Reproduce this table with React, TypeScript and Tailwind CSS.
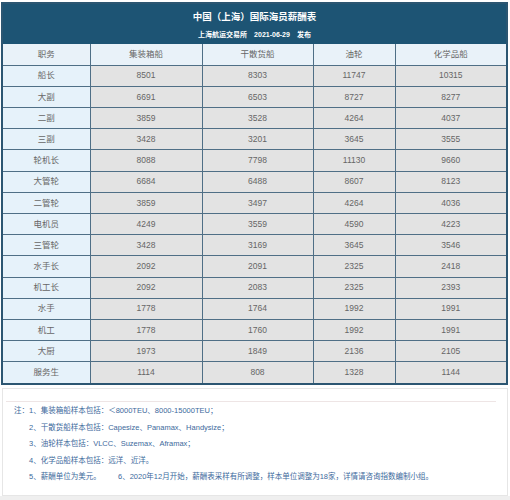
const columns = ['职务', '集装箱船', '干散货船', '油轮', '化学品船'];

const rows: [string, number, number, number, number][] = [
  ['船长', 8501, 8303, 11747, 10315],
  ['大副', 6691, 6503, 8727, 8277],
  ['二副', 3859, 3528, 4264, 4037],
  ['三副', 3428, 3201, 3645, 3555],
  ['轮机长', 8088, 7798, 11130, 9660],
  ['大管轮', 6684, 6488, 8607, 8123],
  ['二管轮', 3859, 3497, 4264, 4036],
  ['电机员', 4249, 3559, 4590, 4223],
  ['三管轮', 3428, 3169, 3645, 3546],
  ['水手长', 2092, 2091, 2325, 2418],
  ['机工长', 2092, 2083, 2325, 2393],
  ['水手', 1778, 1764, 1992, 1991],
  ['机工', 1778, 1760, 1992, 1991],
  ['大厨', 1973, 1849, 2136, 2105],
  ['服务生', 1114, 808, 1328, 1144],
];

const colWidths = ['w-[87px]', 'w-[112px]', 'w-[111px]', 'w-[82px]', 'w-[111px]'];

const notes = [
  '集装箱船样本包括：＜8000TEU、8000-15000TEU；',
  '干散货船样本包括：Capesize、Panamax、Handysize；',
  '油轮样本包括：VLCC、Suzemax、Aframax；',
  '化学品船样本包括：远洋、近洋。',
];

const font = { fontFamily: '"Liberation Sans", "Noto Sans CJK SC", sans-serif' };

export default function App() {
  return (
    <div className="w-[510px] h-[500px] bg-white overflow-hidden pt-[2px]" style={font}>
      {/* salary table */}
      <div className="mx-[1px] w-[507px] border-2 border-[#2c5672]">
        <div className="h-[40px] bg-[#1d5474] text-white flex flex-col items-center font-bold">
          <div className="text-[9.5px] leading-none mt-[8px]">中国（上海）国际海员薪酬表</div>
          <div className="text-[7px] leading-none mt-[9px]">上海航运交易所　2021-06-29　发布</div>
        </div>
        <table className="w-full table-fixed border-collapse text-[8.5px] text-[#666]">
          <thead>
            <tr>
              {columns.map((c, i) => (
                <th
                  key={c}
                  className={`${colWidths[i]} h-[21.2px] p-0 font-normal bg-[#e9f2f9] border border-[#4f6f86] border-t-0 ${i === 0 ? 'border-l-0' : ''} ${i === 4 ? 'border-r-0' : ''}`}
                >
                  {c}
                </th>
              ))}
            </tr>
          </thead>
          <tbody>
            {rows.map((r, ri) => (
              <tr key={r[0]}>
                {r.map((v, i) => (
                  <td
                    key={i}
                    className={`h-[21.2px] p-0 text-center border border-[#4f6f86] ${i === 0 ? 'bg-[#e6f2fa] border-l-0' : 'bg-[#e3e3e3]'} ${i === 4 ? 'border-r-0' : ''} ${ri === rows.length - 1 ? 'border-b-0' : ''}`}
                  >
                    {v}
                  </td>
                ))}
              </tr>
            ))}
          </tbody>
        </table>
      </div>

      {/* notes */}
      <div className="mt-[3px] mx-[2px] h-[108px] border border-[#e6e6e6] bg-white px-[3px] pt-[12px] text-[7.5px] text-[#3d6a9c] leading-none">
        <div className="h-px bg-[#eee5e5] mr-[8px]" />
        <div className="flex flex-col gap-[9px] mt-[5px] pl-[8px]">
          {notes.map((n, i) => (
            <div key={n} className="flex">
              <span className="w-[15px]">{i === 0 ? '注：' : ''}</span>
              <span>{i + 1}、{n}</span>
            </div>
          ))}
          <div className="flex">
            <span className="w-[15px]" />
            <span className="w-[89px]">5、薪酬单位为美元。</span>
            <span>6、2020年12月开始，薪酬表采样有所调整，样本单位调整为18家，详情请咨询指数编制小组。</span>
          </div>
        </div>
      </div>
      <div className="h-[5px] bg-[#efefef]" />
    </div>
  );
}
